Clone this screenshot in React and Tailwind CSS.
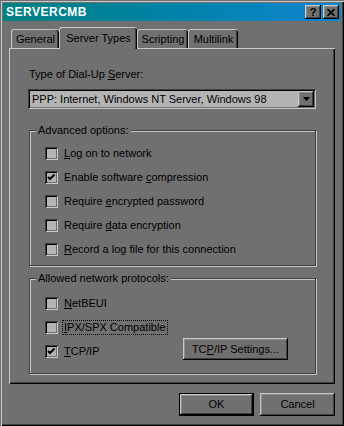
import React from 'react';

// Win98-like dialog: face #707070, hi #c8c8c8, field #b4b4b4
const raised =
  'shadow-[inset_-1px_-1px_#000,inset_1px_1px_#c8c8c8,inset_-2px_-2px_#404040,inset_2px_2px_#8c8c8c]';
const sunken =
  'shadow-[inset_1px_1px_#404040,inset_-1px_-1px_#c8c8c8,inset_2px_2px_#000,inset_-2px_-2px_#707070]';

function Check({ checked }) {
  return (
    <div className={`w-[13px] h-[13px] shrink-0 bg-[#b4b4b4] ${sunken} flex items-center justify-center`}>
      {checked && (
        <svg width="9" height="9" viewBox="0 0 9 9">
          <path d="M1 4 L3 6 L7.5 1.5" stroke="#000" strokeWidth="2" fill="none" />
        </svg>
      )}
    </div>
  );
}

function Row({ checked, children, focus }) {
  return (
    <div className="h-[24px] flex items-center">
      <Check checked={checked} />
      <span className={`ml-[4px] px-[1px] leading-[13px] ${focus ? 'border border-dotted border-black' : 'border border-transparent'}`}>
        {children}
      </span>
    </div>
  );
}

function Group({ title, className, children }) {
  return (
    <div className={`relative border border-[#404040] shadow-[inset_1px_1px_#c8c8c8,1px_1px_#c8c8c8] ${className}`}>
      <span className="absolute -top-[8px] left-[6px] px-[2px] bg-[#707070] leading-[14px]">{title}</span>
      {children}
    </div>
  );
}

function Tab({ label, w, active }) {
  return (
    <div
      className={`relative flex justify-center rounded-t-[3px] bg-[#707070] border-t border-l border-[#c8c8c8] shadow-[inset_-1px_0_#000,inset_-2px_0_#404040] ${w} ${
        active ? 'h-[22px] -mb-[1px] z-10 pt-[3px]' : 'h-[19px] pt-[2px]'
      }`}
    >
      <span className="leading-[14px]">{label}</span>
    </div>
  );
}

export default function App() {
  return (
    <div
      className="w-[344px] h-[426px] bg-[#707070] p-[3px] flex flex-col text-[11px] text-black shadow-[inset_1px_1px_#707070,inset_2px_2px_#c8c8c8,inset_-1px_-1px_#000,inset_-2px_-2px_#404040]"
      style={{ fontFamily: '"Liberation Sans", Arial, sans-serif' }}
    >
      {/* title bar */}
      <div className="h-[18px] shrink-0 flex items-center justify-between pl-[3px] pr-[2px] bg-gradient-to-r from-[#008080] to-[#1084d0]">
        <span className="text-white font-bold text-[12px] tracking-[0.5px]">SERVERCMB</span>
        <div className="flex gap-[2px]">
          <div className={`w-[16px] h-[14px] bg-[#707070] ${raised} flex items-center justify-center`}>
            <span className="font-bold text-[11px] leading-none">?</span>
          </div>
          <div className={`w-[16px] h-[14px] bg-[#707070] ${raised} flex items-center justify-center`}>
            <svg width="8" height="7" viewBox="0 0 8 7">
              <path d="M0.5 0 L7.5 7 M7.5 0 L0.5 7" stroke="#000" strokeWidth="1.6" />
            </svg>
          </div>
        </div>
      </div>

      {/* tabs + panel */}
      <div className="flex-1 flex flex-col mx-[6px] mt-[6px]">
        <div className="flex items-end pl-[2px] h-[21px] shrink-0">
          <Tab label="General" w="w-[48px]" />
          <Tab label="Server Types" w="w-[78px]" active />
          <Tab label="Scripting" w="w-[51px]" />
          <Tab label="Multilink" w="w-[50px]" />
        </div>
        <div className="flex-1 pl-[19px] pr-[19px] pt-[19px] shadow-[inset_1px_1px_#c8c8c8,inset_-1px_-1px_#000,inset_-2px_-2px_#404040]">
          <div className="leading-[14px] pl-[1px]">
            Type of Dial-Up <u>S</u>erver:
          </div>
          <div className={`mt-[8px] h-[20px] bg-[#b4b4b4] ${sunken} flex items-center justify-between pl-[4px] pr-[2px]`}>
            <span>PPP: Internet, Windows NT Server, Windows 98</span>
            <div className={`w-[16px] h-[16px] bg-[#707070] ${raised} flex items-center justify-center`}>
              <svg width="7" height="4" viewBox="0 0 7 4">
                <path d="M0 0 H7 L3.5 4 Z" fill="#000" />
              </svg>
            </div>
          </div>

          <Group title="Advanced options:" className="mt-[21px] ml-[1px] h-[136px] pl-[15px] pt-[10px]">
            <Row><u>L</u>og on to network</Row>
            <Row checked>Enable software <u>c</u>ompression</Row>
            <Row>Require <u>e</u>ncrypted password</Row>
            <Row>Require <u>d</u>ata encryption</Row>
            <Row><u>R</u>ecord a log file for this connection</Row>
          </Group>

          <Group title="Allowed network protocols:" className="mt-[12px] ml-[1px] h-[96px] pl-[15px] pt-[12px]">
            <Row><u>N</u>etBEUI</Row>
            <Row focus><u>I</u>PX/SPX Compatible</Row>
            <div className="flex items-center justify-between pr-[27px]">
              <Row checked><u>T</u>CP/IP</Row>
              <div className={`w-[105px] h-[22px] -mt-[4px] bg-[#707070] ${raised} flex items-center justify-center`}>
                TC<u>P</u>/IP Settings...
              </div>
            </div>
          </Group>
        </div>
      </div>

      {/* buttons */}
      <div className="h-[23px] shrink-0 mt-[9px] mb-[7px] mr-[6px] flex justify-end gap-[6px]">
        <div className="w-[75px] h-[23px] border border-black">
          <div className={`w-full h-full bg-[#707070] ${raised} flex items-center justify-center`}>OK</div>
        </div>
        <div className={`w-[75px] h-[23px] bg-[#707070] ${raised} flex items-center justify-center`}>Cancel</div>
      </div>
    </div>
  );
}
